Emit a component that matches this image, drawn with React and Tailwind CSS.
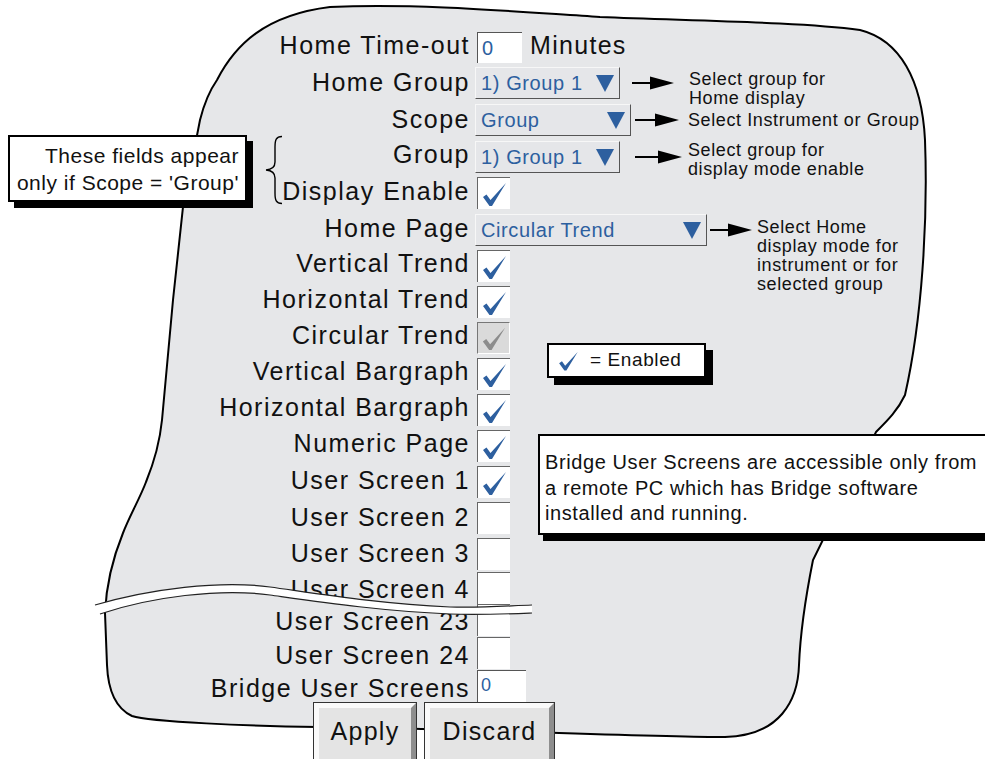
import React from 'react';

const BLUE = '#2d5f9f';

function Tick({ color = BLUE, className = 'w-full h-full' }) {
    return (
        <svg viewBox="0 0 32 31" className={className}>
            <path d="M5 19 L8.5 16.5 L12.5 22 L28 5 L14 28 L11.5 28 Z" fill={color} />
        </svg>
    );
}

// nudge: small padding that moves the label off the row centre, the way the artwork has it
function Row({ label, h, nudge = 'pb-[4px]', children }) {
    return (
        <div className={`flex items-center ${h}`}>
            <div className={`w-[470px] shrink-0 text-right text-[25px] leading-none tracking-[1.5px] whitespace-nowrap text-[#111] ${nudge}`}>
                {label}
            </div>
            {children}
        </div>
    );
}

function Check({ on = false, disabled = false }) {
    if (disabled) {
        return (
            <div className="ml-[7px] w-[33px] h-[32px] shrink-0 bg-[#dadada] border-t border-l border-t-[#777] border-l-[#777] border-r border-b border-r-white border-b-white">
                <Tick color="#8c8c8c" />
            </div>
        );
    }
    return (
        <div className="ml-[7px] w-[33px] h-[32px] shrink-0 bg-white border-t border-l border-[#666]">
            {on && <Tick />}
        </div>
    );
}

function Dropdown({ value, w }) {
    return (
        <div className={`ml-[5px] ${w} h-[32px] shrink-0 flex items-center justify-between pl-[5px] pr-[5px] bg-[#e5e6e9] border-t border-l border-t-[#f7f7f7] border-l-[#f7f7f7] border-r border-b border-r-[#555] border-b-[#555]`}>
            <span className="text-[20px] tracking-[0.6px] text-[#2d5f9f] whitespace-nowrap">{value}</span>
            <svg width="18" height="18" viewBox="0 0 18 18">
                <polygon points="0,1 18,1 9,18" fill={BLUE} />
            </svg>
        </div>
    );
}

function Pointer({ line, className }) {
    return (
        <svg width={line + 24} height="14" className={`shrink-0 ${className}`}>
            <line x1="0" y1="7" x2={line + 2} y2="7" stroke="black" strokeWidth="2" />
            <polygon points={`${line},0.5 ${line + 24},7 ${line},13.5`} fill="black" />
        </svg>
    );
}

export default function App() {
    return (
        <div className="relative w-[985px] h-[759px] overflow-hidden bg-white font-['Liberation_Sans',Arial,sans-serif] text-[#111]">
            {/* panel outline */}
            <svg className="absolute inset-0" width="985" height="759" viewBox="0 0 985 759">
                <path
                    d="M217 80 C235 45 265 15 330 7 C420 3 520 12 600 17 C700 21 800 22 860 30 C900 40 922 80 925 140 C928 220 922 320 905 395 C898 410 888 420 876 432 L813 560 C805 600 800 640 799 665 C798 700 780 736 725 737 C650 737 450 728 318 727 C250 726 150 722 132 716 C115 708 108 690 107 665 L105 613 C106 590 112 560 123 533 C130 515 140 498 146 482 C155 460 160 440 162 420 L173 300 L183 207 L200 120 C205 100 210 90 217 80 Z"
                    fill="#e6e7e9"
                    stroke="black"
                    strokeWidth="2"
                />
            </svg>

            {/* form */}
            <div className="relative pt-[29px]">
                <Row label="Home Time-out" h="h-[36px]">
                    <div className="ml-[7px] w-[45px] h-[31px] shrink-0 flex items-center pl-[4px] bg-white border-t border-l border-[#555] text-[20px] text-[#2d5f9f]">0</div>
                    <span className="ml-[8px] pb-[4px] text-[25px] leading-none tracking-[1.3px]">Minutes</span>
                </Row>
                <Row label="Home Group" h="h-[36px]" nudge="pb-[2px]">
                    <Dropdown value="1) Group 1" w="w-[145px]" />
                    <Pointer line={18} className="ml-[12px]" />
                    <div className="self-start mt-[5px] ml-[15px] text-[18px] leading-[19px] tracking-[0.6px]">
                        <div>Select group for</div>
                        <div>Home display</div>
                    </div>
                </Row>
                <Row label="Scope" h="h-[38px]" nudge="pb-[2px]">
                    <Dropdown value="Group" w="w-[156px]" />
                    <Pointer line={20} className="ml-[4px]" />
                    <div className="ml-[9px] text-[18px] leading-[19px] tracking-[0.6px] whitespace-nowrap">Select Instrument or Group</div>
                </Row>
                <Row label="Group" h="h-[35px]">
                    <Dropdown value="1) Group 1" w="w-[145px]" />
                    <Pointer line={23} className="ml-[15px]" />
                    <div className="self-start mt-[2px] ml-[6px] text-[18px] leading-[19px] tracking-[0.6px]">
                        <div>Select group for</div>
                        <div>display mode enable</div>
                    </div>
                </Row>
                <Row label="Display Enable" h="h-[38px]">
                    <Check on />
                </Row>
                <Row label="Home Page" h="h-[36px]">
                    <Dropdown value="Circular Trend" w="w-[232px]" />
                    <Pointer line={18} className="ml-[3px]" />
                    <div className="self-start mt-[6px] ml-[5px] text-[18px] leading-[19px] tracking-[0.6px] whitespace-nowrap">
                        <div>Select Home</div>
                        <div>display mode for</div>
                        <div>instrument or for</div>
                        <div>selected group</div>
                    </div>
                </Row>
                <Row label="Vertical Trend" h="h-[36px]" nudge="pb-[6px]"><Check on /></Row>
                <Row label="Horizontal Trend" h="h-[36px]" nudge="pb-[6px]"><Check on /></Row>
                <Row label="Circular Trend" h="h-[36px]" nudge="pb-[6px]"><Check disabled /></Row>
                <Row label="Vertical Bargraph" h="h-[36px]" nudge="pb-[6px]"><Check on /></Row>
                <Row label="Horizontal Bargraph" h="h-[36px]" nudge="pb-[6px]"><Check on /></Row>
                <Row label="Numeric Page" h="h-[36px]" nudge="pb-[6px]"><Check on /></Row>
                <Row label="User Screen 1" h="h-[36px]"><Check on /></Row>
                <Row label="User Screen 2" h="h-[36px]" nudge="pb-[2px]"><Check /></Row>
                <Row label="User Screen 3" h="h-[36px]" nudge="pb-[2px]"><Check /></Row>
                <Row label="User Screen 4" h="h-[31px]" nudge="pt-[4px]"><Check /></Row>
                <Row label="User Screen 23" h="h-[33px]" nudge="pt-[4px]"><Check /></Row>
                <Row label="User Screen 24" h="h-[33px]" nudge="pt-[6px]"><Check /></Row>
                <Row label="Bridge User Screens" h="h-[34px]" nudge="pt-[4px]">
                    <div className="ml-[7px] w-[49px] h-[33px] shrink-0 pl-[3px] pt-[4px] bg-white border-t border-l border-[#555] text-[18px] leading-[20px] text-[#2d5f9f]">0</div>
                </Row>

                {/* buttons */}
                <div className="flex gap-[7px] pl-[313px] -mt-[1px]">
                    <div className="w-[104px] h-[70px] border border-[#333] bg-[#e4e4e4]">
                        <div className="h-full border-[5px] border-t-[#fafafa] border-l-[#fafafa] border-r-[#8e8e8e] border-b-[#8e8e8e] flex justify-center pt-[11px] text-[25px] leading-none tracking-[1.3px]">Apply</div>
                    </div>
                    <div className="w-[131px] h-[70px] border border-[#333] bg-[#e4e4e4]">
                        <div className="h-full border-[5px] border-t-[#fafafa] border-l-[#fafafa] border-r-[#8e8e8e] border-b-[#8e8e8e] flex justify-center pt-[11px] text-[25px] leading-none tracking-[1.3px]">Discard</div>
                    </div>
                </div>
            </div>

            {/* break in the list */}
            <svg className="absolute left-0 top-0 pointer-events-none" width="985" height="759" viewBox="0 0 985 759">
                <path d="M95 605 C150 589 220 580 270 587 C320 594 380 604 450 607 C480 608 505 606 532 605 L532 613 C505 614 480 615 450 614 C380 611 320 602 270 595 C220 588 150 597 100 614 Z" fill="white" />
                <path d="M95 605 C150 589 220 580 270 587 C320 594 380 604 450 607 C480 608 505 606 532 605" fill="none" stroke="#222" strokeWidth="1.2" />
                <path d="M100 614 C150 597 220 588 270 595 C320 602 380 611 450 614 C480 615 505 614 532 613" fill="none" stroke="#222" strokeWidth="1.2" />
            </svg>

            {/* scope note */}
            <div className="absolute left-[8px] top-[135px] w-[239px] h-[67px] bg-white border-2 border-black shadow-[6px_6px_0_0_#000] flex flex-col justify-center pr-[6px] text-right text-[21px] leading-[27px] tracking-[0.5px]">
                <div>These fields appear</div>
                <div>only if Scope = 'Group'</div>
            </div>
            <svg className="absolute left-[263px] top-[135px]" width="22" height="70" viewBox="0 0 22 70">
                <path d="M19 1.5 C13 1.5 12 5 12 12 L12 27 C12 32 9 34.5 3 35 C9 35.5 12 38 12 43 L12 58 C12 65 13 68.5 19 68.5" fill="none" stroke="black" strokeWidth="1.4" />
            </svg>

            {/* legend */}
            <div className="absolute left-[547px] top-[343px] w-[159px] h-[35px] bg-white border-2 border-black shadow-[7px_7px_0_0_#000] flex items-center pl-[6px] text-[19px] tracking-[0.6px]">
                <Tick className="w-[26px] h-[25px]" />
                <span className="ml-[9px]">= Enabled</span>
            </div>

            {/* bridge note */}
            <div className="absolute left-[538px] top-[434px] w-[470px] h-[101px] bg-white border-2 border-black shadow-[5px_6px_0_0_#000] pl-[5px] pt-[14px] text-[20px] leading-[25.5px] tracking-[0.6px]">
                <div>Bridge User Screens are accessible only from</div>
                <div>a remote PC which has Bridge software</div>
                <div>installed and running.</div>
            </div>
        </div>
    );
}
